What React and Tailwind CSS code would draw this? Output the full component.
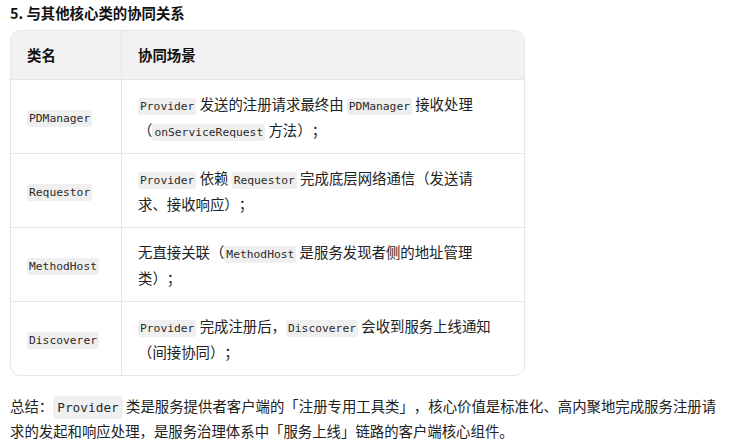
import React from "react";

const cjk = { fontFamily: '"Noto Sans CJK SC", "Noto Sans", sans-serif' };
const mono = { fontFamily: '"DejaVu Sans Mono", "Liberation Mono", monospace' };

function C({ children }) {
  return (
    <code
      className="rounded-[3px] bg-[#efefef] px-[2px] py-[2px] text-[11.3px] leading-none text-[#2b2b2b]"
      style={mono}
    >
      {children}
    </code>
  );
}

const rows = [
  {
    name: "PDManager",
    desc: (
      <>
        <C>Provider</C> 发送的注册请求最终由 <C>PDManager</C> 接收处理（<C>onServiceRequest</C> 方法）；
      </>
    ),
  },
  {
    name: "Requestor",
    desc: (
      <>
        <C>Provider</C> 依赖 <C>Requestor</C> 完成底层网络通信（发送请求、接收响应）；
      </>
    ),
  },
  {
    name: "MethodHost",
    desc: (
      <>
        无直接关联（<C>MethodHost</C> 是服务发现者侧的地址管理类）；
      </>
    ),
  },
  {
    name: "Discoverer",
    desc: (
      <>
        <C>Provider</C> 完成注册后，<C>Discoverer</C> 会收到服务上线通知（间接协同）；
      </>
    ),
  },
];

export default function App() {
  return (
    <div
      className="w-[754px] h-[441px] overflow-hidden bg-white px-[10px] text-[#1f1f1f] [text-spacing-trim:space-all]"
      style={cjk}
    >
      <div className="h-[30px] pt-[1px] text-[14.4px] font-bold leading-[24px] text-[#111]">5. 与其他核心类的协同关系</div>
      <div className="w-[515px] overflow-hidden rounded-[10px] border border-[#e6e6e6]">
        <div className="grid grid-cols-[110px_1fr] bg-[#f2f2f2] text-[14.4px] font-bold leading-[26px] text-[#111]">
          <div className="px-4 py-[11px]">类名</div>
          <div className="border-l border-[#e6e6e6] px-4 py-[11px]">协同场景</div>
        </div>
        {rows.map((r) => (
          <div key={r.name} className="grid grid-cols-[110px_1fr] border-t border-[#e6e6e6] text-[14.4px] leading-[25.5px]">
            <div className="flex items-center px-4">
              <span className="leading-[16px]"><C>{r.name}</C></span>
            </div>
            <div className="border-l border-[#e6e6e6] px-4 py-[11px]">
              <div className="w-[362px] text-[#222]">{r.desc}</div>
            </div>
          </div>
        ))}
      </div>
      <div className="mt-[17px] w-[716px] text-[14.4px] leading-[25px] text-[#222]">
        总结：<code
          className="rounded-[4px] bg-[#f0f0f0] px-[4px] py-[4px] text-[12.8px] leading-none text-[#2b2b2b]"
          style={mono}
        >Provider</code> 类是服务提供者客户端的「注册专用工具类」，核心价值是标准化、高内聚地完成服务注册请求的发起和响应处理，是服务治理体系中「服务上线」链路的客户端核心组件。
      </div>
    </div>
  );
}
